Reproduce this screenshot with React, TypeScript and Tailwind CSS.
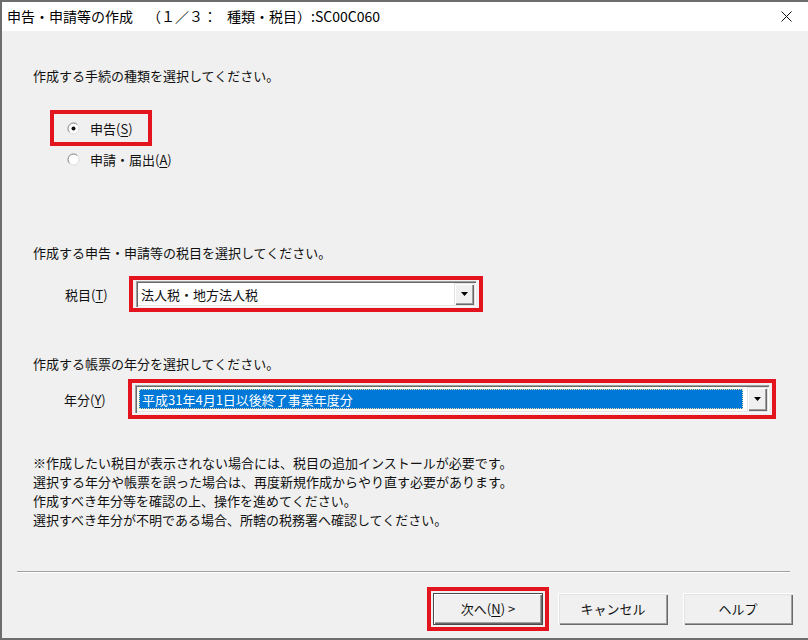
import React from 'react';

const RED = 'border-4 border-[#e3141e]';

const Radio = ({ checked }: { checked?: boolean }) => (
  <svg width="13" height="13" viewBox="0 0 13 13">
    <circle cx="6.5" cy="6.5" r="5.5" fill="#fff" />
    <path d="M10.39 2.61 A5.5 5.5 0 0 0 2.61 10.39" fill="none" stroke="#7a7a7a" strokeWidth="1" />
    <path d="M2.61 10.39 A5.5 5.5 0 0 0 10.39 2.61" fill="none" stroke="#dcdcdc" strokeWidth="1" />
    {checked && <circle cx="6.5" cy="6.5" r="2" fill="#111" />}
  </svg>
);

const DropButton = () => (
  <div className="w-[20px] self-stretch flex items-center justify-center bg-[#f0f0f0] shadow-[inset_1px_1px_0_#e3e3e3,inset_2px_2px_0_#fff,inset_-1px_-1px_0_#696969,inset_-2px_-2px_0_#a0a0a0]">
    <svg width="7" height="4" viewBox="0 0 7 4">
      <path d="M0 0 H7 L3.5 4 Z" fill="#000" />
    </svg>
  </div>
);

const Mn = ({ children }: { children: React.ReactNode }) => <span className="underline underline-offset-2">{children}</span>;

const App: React.FC = () => {
  return (
    <div className="w-[808px] h-[640px] bg-[#f0f0f0] border-l-2 border-t-2 border-b-2 border-[#6d6d6d] flex flex-col text-[13px] text-[#111] font-['Noto_Sans_CJK_JP','Noto_Sans',sans-serif] overflow-hidden">
      {/* title bar */}
      <div className="h-[29px] bg-white flex items-center justify-between pl-[5px] pr-[16px] text-[14px] text-black">
        <span>
          申告・申請等の作成<span className="ml-[14px]">（１／３：</span><span className="ml-[10px]">種類・税目）:SC00C060</span>
        </span>
        <svg width="11" height="11" viewBox="0 0 11 11">
          <path d="M0.5 0.5 L10.5 10.5 M10.5 0.5 L0.5 10.5" stroke="#111" strokeWidth="1" />
        </svg>
      </div>

      <div className="flex flex-col flex-1">
        <p className="mt-[35px] ml-[31px] leading-[19px]">作成する手続の種類を選択してください。</p>

        <div className="mt-[25px] ml-[48px]">
          <div className={`${RED} h-[36px] w-[102px] flex items-center pl-[13px] gap-[10px]`}>
            <Radio checked />
            <span className="leading-[19px]">申告(<Mn>S</Mn>)</span>
          </div>
        </div>
        <div className="mt-[4px] ml-[65px] h-[19px] flex items-center gap-[10px]">
          <Radio />
          <span className="leading-[19px]">申請・届出(<Mn>A</Mn>)</span>
        </div>

        <p className="mt-[74px] ml-[31px] leading-[19px]">作成する申告・申請等の税目を選択してください。</p>

        <div className="mt-[14px] h-[36px] flex items-center">
          <span className="ml-[63px] w-[64px] leading-[19px]">税目(<Mn>T</Mn>)</span>
          <div className={`${RED} w-[354px] h-[36px] px-[3px] py-[1px]`}>
            <div className="h-full flex items-stretch bg-white p-[2px] shadow-[inset_1px_1px_0_#a0a0a0,inset_2px_2px_0_#696969,inset_-1px_-1px_0_#fff,inset_-2px_-2px_0_#e3e3e3]">
              <div className="flex-1 flex items-center pl-[3px] leading-[19px]">法人税・地方法人税</div>
              <DropButton />
            </div>
          </div>
        </div>

        <p className="mt-[42px] ml-[31px] leading-[19px]">作成する帳票の年分を選択してください。</p>

        <div className="mt-[6px] h-[40px] flex items-center">
          <span className="ml-[62px] w-[64px] leading-[19px]">年分(<Mn>Y</Mn>)</span>
          <div className={`${RED} w-[648px] h-[40px] px-[3px] py-[2px]`}>
            <div className="h-full flex items-stretch bg-white p-[2px] shadow-[inset_1px_1px_0_#a0a0a0,inset_2px_2px_0_#696969,inset_-1px_-1px_0_#fff,inset_-2px_-2px_0_#e3e3e3]">
              <div className="flex-1 flex p-[1px] mr-[3px] ml-[1px] my-[1px]">
                <div className="flex-1 flex items-center pl-[2px] bg-[#0078d7] text-white border border-dotted border-[#e6dca0] leading-[19px]">
                  平成31年4月1日以後終了事業年度分
                </div>
              </div>
              <DropButton />
            </div>
          </div>
        </div>

        <div className="mt-[34px] ml-[31px] leading-[19px]">
          <p>※作成したい税目が表示されない場合には、税目の追加インストールが必要です。</p>
          <p>選択する年分や帳票を誤った場合は、再度新規作成からやり直す必要があります。</p>
          <p>作成すべき年分等を確認の上、操作を進めてください。</p>
          <p>選択すべき年分が不明である場合、所轄の税務署へ確認してください。</p>
        </div>

        <div className="mt-[42px] ml-[15px] w-[773px] h-[2px] border-t border-t-[#a0a0a0] border-b border-b-white" />

        <div className="mt-[14px] flex justify-end items-center pr-[15px]">
          <div className={`${RED} p-[2px] mr-[9px]`}>
            <button className="w-[110px] h-[32px] bg-[#f0f0f0] border border-[#4a4a4a] shadow-[inset_1px_1px_0_#fff,inset_-1px_-1px_0_#696969,inset_-2px_-2px_0_#a0a0a0] flex items-center justify-center">
              次へ(<Mn>N</Mn>) &gt;
            </button>
          </div>
          <button className="w-[110px] h-[32px] mr-[15px] bg-[#f0f0f0] shadow-[inset_1px_1px_0_#fff,inset_2px_2px_0_#e3e3e3,inset_-1px_-1px_0_#696969,inset_-2px_-2px_0_#a0a0a0] flex items-center justify-center">
            キャンセル
          </button>
          <button className="w-[110px] h-[32px] bg-[#f0f0f0] shadow-[inset_1px_1px_0_#fff,inset_2px_2px_0_#e3e3e3,inset_-1px_-1px_0_#696969,inset_-2px_-2px_0_#a0a0a0] flex items-center justify-center">
            ヘルプ
          </button>
        </div>
      </div>
    </div>
  );
};

export default App;
